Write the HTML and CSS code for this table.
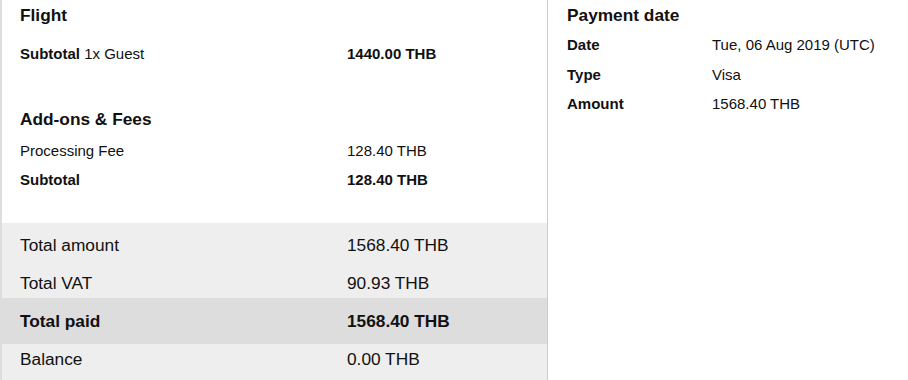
FILE: index.html
```html
<!DOCTYPE html>
<html>
<head>
<meta charset="utf-8">
<link rel="stylesheet" href="styles.css">
</head>
<body>
<div class="page">
  <section class="summary">
    <div class="block flight">
      <h2 class="heading">Flight</h2>
      <div class="row small-row">
        <span class="label"><b>Subtotal</b> 1x Guest</span>
        <span class="value bold">1440.00 THB</span>
      </div>
    </div>
    <div class="block addons">
      <h2 class="heading">Add-ons &amp; Fees</h2>
      <div class="row small-row">
        <span class="label">Processing Fee</span>
        <span class="value">128.40 THB</span>
      </div>
      <div class="row small-row">
        <span class="label bold">Subtotal</span>
        <span class="value bold">128.40 THB</span>
      </div>
    </div>
    <div class="totals">
      <div class="row big-row">
        <span class="label">Total amount</span>
        <span class="value">1568.40 THB</span>
      </div>
      <div class="row big-row">
        <span class="label">Total VAT</span>
        <span class="value">90.93 THB</span>
      </div>
      <div class="row big-row paid">
        <span class="label bold">Total paid</span>
        <span class="value bold">1568.40 THB</span>
      </div>
      <div class="row big-row">
        <span class="label">Balance</span>
        <span class="value">0.00 THB</span>
      </div>
    </div>
  </section>
  <section class="payment">
    <h2 class="heading">Payment date</h2>
    <div class="pay-list">
      <div class="prow">
        <span class="plabel">Date</span>
        <span class="pvalue">Tue, 06 Aug 2019 (UTC)</span>
      </div>
      <div class="prow">
        <span class="plabel">Type</span>
        <span class="pvalue">Visa</span>
      </div>
      <div class="prow">
        <span class="plabel">Amount</span>
        <span class="pvalue">1568.40 THB</span>
      </div>
    </div>
  </section>
</div>
</body>
</html>
```
FILE: styles.css
```css
html, body {
  margin: 0;
  padding: 0;
  background: #ffffff;
}
body {
  font-family: "Liberation Sans", Arial, sans-serif;
  color: #111111;
  width: 908px;
  height: 380px;
  overflow: hidden;
}
.page {
  display: flex;
  align-items: stretch;
  height: 380px;
}
.summary {
  width: 545px;
  border-left: 2px solid #dddddd;
  border-right: 1px solid #cccccc;
  display: flex;
  flex-direction: column;
}
.heading {
  margin: 0;
  font-size: 17.3px;
  line-height: 20px;
  font-weight: bold;
}
.block {
  padding-left: 18px;
}
.flight {
  padding-top: 5px;
}
.flight .heading {
  margin-bottom: 14px;
}
.addons {
  margin-top: 41px;
}
.addons .heading {
  margin-bottom: 7px;
}
.row {
  display: grid;
  grid-template-columns: 327px 1fr;
}
.small-row {
  font-size: 15px;
  line-height: 29px;
}
.bold, b {
  font-weight: bold;
}
.totals {
  margin-top: 29px;
  background: #eeeeee;
  padding-top: 3px;
  flex: 1;
}
.big-row {
  font-size: 17.3px;
  line-height: 38px;
  padding-left: 18px;
}
.paid {
  background: #dddddd;
  padding-top: 4px;
  padding-bottom: 4px;
  margin: -4px 0;
}
.payment {
  padding-left: 19px;
  padding-top: 5px;
  flex: 1;
}
.pay-list {
  margin-top: 5px;
}
.prow {
  display: grid;
  grid-template-columns: 145px 1fr;
  font-size: 15px;
  line-height: 29.5px;
}
.plabel {
  font-weight: bold;
}
```
